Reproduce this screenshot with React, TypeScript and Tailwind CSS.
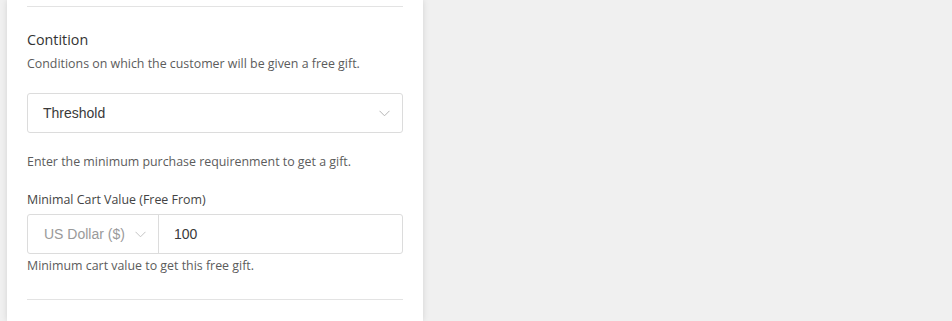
import React from 'react';

function Chevron({ className }: { className?: string }) {
  return (
    <svg className={className} width="11" height="7" viewBox="0 0 11 7" fill="none">
      <path d="M0.5 0.8 L5.5 5.8 L10.5 0.8" stroke="currentColor" strokeWidth="1" />
    </svg>
  );
}

export default function App() {
  return (
    <div className="w-[952px] h-[321px] overflow-hidden bg-[#f0f0f0] flex" style={{ fontFamily: '"Open Sans", sans-serif' }}>
      <div className="ml-[7px] w-[416px] h-full bg-white shadow-[0_0_6px_rgba(0,0,0,0.12)] px-5">
        <div className="h-[7px] border-b border-[#e3e3e3]" />

        <h3 className="mt-[23px] text-[14.3px] leading-5 text-[#333333]">Contition</h3>
        <p className="mt-[5px] text-[12.4px] leading-[18px] text-[#5c5c5c]">Conditions on which the customer will be given a free gift.</p>

        <div className="mt-[20px] h-10 rounded-[3px] border border-[#dcdcdc] flex items-center justify-between pl-[15px] pr-[12px]">
          <span className="text-[14px] text-[#3a3a3a]" style={{ fontFamily: '"Liberation Sans", Arial, sans-serif' }}>Threshold</span>
          <Chevron className="text-[#b5b5b5]" />
        </div>

        <p className="mt-[20px] text-[12.4px] leading-[18px] text-[#5c5c5c]">Enter the minimum purchase requirenment to get a gift.</p>

        <p className="mt-[20px] text-[12.4px] leading-[18px] text-[#444444]">Minimal Cart Value (Free From)</p>

        <div className="mt-[5px] h-10 rounded-[3px] border border-[#dcdcdc] flex" style={{ fontFamily: '"Liberation Sans", Arial, sans-serif' }}>
          <div className="w-[131px] border-r border-[#dcdcdc] flex items-center pl-[16px] gap-[10px]">
            <span className="text-[14px] text-[#9a9a9a]">US Dollar ($)</span>
            <Chevron className="text-[#c4c4c4]" />
          </div>
          <div className="flex-1 flex items-center pl-[15px]">
            <span className="text-[14px] text-[#3a3a3a]">100</span>
          </div>
        </div>

        <p className="mt-[3px] text-[12.4px] leading-[18px] text-[#5c5c5c]">Minimum cart value to get this free gift.</p>

        <div className="mt-[24px] border-t border-[#e3e3e3]" />
      </div>
    </div>
  );
}
